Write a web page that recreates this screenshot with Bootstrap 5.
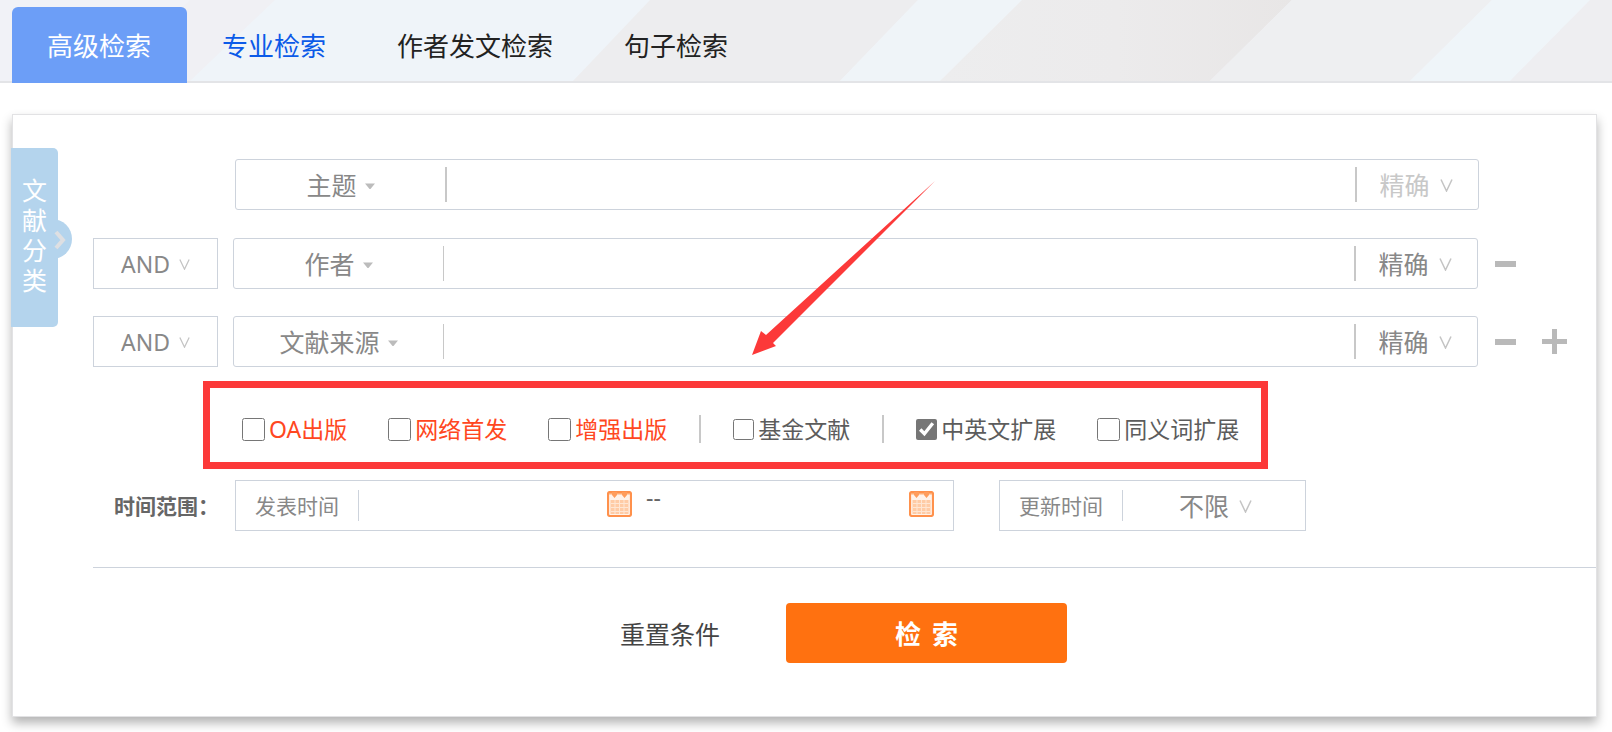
<!DOCTYPE html>
<html lang="zh-CN">
<head>
<meta charset="utf-8">
<meta name="viewport" content="width=device-width, initial-scale=1">
<title>高级检索</title>
<link href="https://cdn.jsdelivr.net/npm/bootstrap@5.3.0/dist/css/bootstrap.min.css" rel="stylesheet">
<style>
body { font-family: "Noto Sans", "Noto Sans CJK SC", sans-serif; color: #666; background: #fff; line-height: 30px; }
.topbar { background: #f1f2f7; border-bottom: 2px solid #e3e4e7; padding: 7px 12px 0; }
.topbar-art { position: absolute; inset: 0; width: 100%; height: 100%; }
.tabs { margin-bottom: -2px; }
.tabs a { padding: 0 36px 0 35px; height: 76px; line-height: 78px; font-size: 26px; color: #222; border-radius: 6px 6px 0 0; white-space: nowrap; }
.tabs a.active { background: #6c9ef7; color: #fff; }
.tabs a.hovered { color: #0b5ae8; }
.panel { margin: 31px 15px 15px 12px; border: 1px solid #e2e2e4; padding: 44px 0 53px 80px; box-shadow: 0 6px 10px rgba(0,0,0,.3); background: #fff; }
.side-tab { position: absolute; left: -2px; top: 33px; width: 47px; height: 179px; font-size: 25px; color: #fff; background: #b4d4ed; border: 0; border-radius: 0 5px 5px 0; padding: 0 2px 5px 0; gap: 5px; }
.side-tab svg { position: absolute; left: 21px; top: 71px; z-index: 0; }
.side-tab span { position: relative; z-index: 1; writing-mode: vertical-rl; }
.query-row { margin-bottom: 27px; gap: 15px; }
.lead-row { margin-bottom: 28px; }
.logic { width: 125px; gap: 9px; }
.lead-row .logic-space { width: 127px; }
.boxed { height: 51px; border: 1px solid #cdd3dc; background: #fff; }
.query-box { border-radius: 3px; }
.field-pick { width: 209px; gap: 7px; }
.field-pick svg { margin-top: 2px; }
.match-pick { width: 121px; gap: 9px; padding-right: 3px; }
.vee { color: #c4c4c4; margin-top: 2px; }
.bar { width: 1px; height: 35px; background: #c8c8c8; flex: none; }
.bar-wide { width: 2px; }
.bar-date { width: 1px; height: 31px; background: #cdd3dc; flex: none; }
.bar-opt { width: 2px; height: 28px; background: #c8c8c8; flex: none; }
select { appearance: none; border: 0; padding: 0; background: transparent; color: #888; font-size: 25px; outline-offset: 2px; }
select:disabled { color: #c8c8c8; opacity: 1; }
.logic select { font-size: 23px; }
.plain-input { border: 0; outline: 0; background: transparent; min-width: 0; font-size: 23px; color: #666; }
.row-tools { width: 103px; gap: 26px; padding-left: 2px; }
.lead-row .row-tools { width: 102px; }
.tool { border: 0; background: transparent; padding: 0; line-height: 0; }
.marked { width: 1065px; max-width: 100%; height: 88px; margin: -13px 0 11px 110px; border: 7px solid #fc3939; padding: 11px 0 3px 32px; gap: 32px; }
.marked label { gap: 4px; font-size: 23px; white-space: nowrap; color: #5c5c5c; }
.marked label + label { margin-left: 9px; }
.marked label.hot { color: #ff4721; }
.marked input { width: 23px; height: 23px; margin: 0; accent-color: #767676; }
.marked input.tight { width: 21px; height: 21px; }
.time-title { width: 142px; padding-left: 21px; font-size: 21px; font-weight: 700; white-space: nowrap; }
.pub-box { width: 719px; margin-right: 45px; }
.pub-box .tool { margin-bottom: 3px; }
.upd-box { width: 307px; }
.upd-pick { padding-left: 3px; gap: 9px; }
.cap { font-size: 21px; color: #888; white-space: nowrap; padding: 0 19px; }
.date-from { width: 248px; }
.date-to { width: 247px; }
.dashes { width: 16px; margin: -18px 0 0 14px; font-size: 23px; }
.rule { height: 1px; background: #cdd3dc; margin: 36px 0 35px; }
.actions { gap: 66px; margin-left: 527px; }
.reset { color: #444; font-size: 25px; border: 0; background: transparent; padding: 2px 0 0; }
.go { width: 281px; height: 60px; padding-top: 3px; gap: 11px; background: #ff7110; color: #fff; font-size: 26px; font-weight: 700; border: 0; border-radius: 4px; }
.pointer-art { position: absolute; left: 738px; top: 65px; pointer-events: none; }
</style>
</head>
<body>
<svg class="d-none" aria-hidden="true">
  <symbol id="vee" viewBox="0 0 13 13"><path d="M1 .5 6.500 12 12 .5" fill="none" stroke="currentColor" stroke-width="1.5"/></symbol>
  <symbol id="tri" viewBox="0 0 10 6"><path d="M0 .5h10L5.500 6h-1z" fill="#bcbcbc"/></symbol>
  <symbol id="minus" viewBox="0 0 21 6"><path d="M0 0h21v6H0z" fill="#b9b9b9"/></symbol>
  <symbol id="cal" viewBox="0 0 25 26">
    <rect x="1" y="1" width="23" height="24" rx="2" fill="#fff3ea" stroke="#ff914c" stroke-width="2.200"/>
    <path d="M2 2h21v1.500H2z" fill="#ffad75"/>
    <path d="M5 1h5v3L7.500 7 5 4zM15 1h5v3l-2.500 3L15 4z" fill="#ff9d5c"/>
    <path d="M3.500 9h18v14h-18z" fill="#ffcba5"/>
    <path d="M4 12.500h17M4 16.500h17M4 20.500h17M8 9v14M12.500 9v14M17 9v14" stroke="#ffe6d3" stroke-width="1"/>
  </symbol>
</svg>

<header class="topbar position-relative">
  <svg class="topbar-art" viewBox="0 0 1612 82" preserveAspectRatio="none" aria-hidden="true">
    <defs><linearGradient id="warm"><stop offset="0" stop-color="#ededee"/><stop offset=".5" stop-color="#ecebec"/><stop offset="1" stop-color="#e8e6e6"/></linearGradient></defs>
    <path d="M190 0h95l-80 82h-95z" fill="#f0f0f4"/>
    <path d="M275 0h378l-80 82H190z" fill="#eff4f9"/>
    <path d="M650 0h268l-78 82H573z" fill="#ededef"/>
    <path d="M918 0h104l-82 82H840z" fill="#eff4f8"/>
    <path d="M1022 0h270l-82 82H940z" fill="url(#warm)"/>
    <path d="M1292 0h200l-82 82h-200z" fill="#eeeff1"/>
    <path d="M1492 0h98l-80 82h-100z" fill="#eff5f9"/>
    <path d="M1590 0h22v82h-102z" fill="#eeeef1"/>
  </svg>
  <nav class="tabs d-flex position-relative">
    <a class="active text-decoration-none" href="#">高级检索</a>
    <a class="hovered text-decoration-none" href="#">专业检索</a>
    <a class="text-decoration-none" href="#">作者发文检索</a>
    <a class="text-decoration-none" href="#">句子检索</a>
  </nav>
</header>

<main class="panel position-relative">
  <button type="button" class="side-tab d-flex flex-column align-items-center justify-content-center">
    <svg width="40" height="40" viewBox="0 0 40 40" aria-hidden="true"><circle cx="20" cy="20" r="20" fill="#b4d4ed"/><path d="m24 13 7 8-7 8" fill="none" stroke="#dedfe2" stroke-width="4"/></svg>
    <span>文</span><span>献</span><span>分</span><span>类</span>
  </button>

  <form>
    <div class="query-row lead-row d-flex">
      <div class="logic-space"></div>
      <div class="boxed query-box d-flex align-items-center flex-grow-1">
        <div class="field-pick d-flex align-items-center justify-content-center"><select aria-label="检索项一"><option>主题</option></select><svg width="10" height="6"><use href="#tri"/></svg></div>
        <span class="bar bar-wide"></span>
        <input class="plain-input flex-grow-1 h-100 px-3" type="text" aria-label="主题">
        <span class="bar bar-wide"></span>
        <div class="match-pick d-flex align-items-center justify-content-center"><select disabled aria-label="匹配一"><option>精确</option></select><svg class="vee" width="13" height="13"><use href="#vee"/></svg></div>
      </div>
      <div class="row-tools"></div>
    </div>

    <div class="query-row d-flex">
      <div class="boxed logic d-flex align-items-center justify-content-center"><select aria-label="逻辑二"><option>AND</option></select><svg class="vee" width="11" height="11"><use href="#vee"/></svg></div>
      <div class="boxed query-box d-flex align-items-center flex-grow-1">
        <div class="field-pick d-flex align-items-center justify-content-center"><select aria-label="检索项二"><option>作者</option></select><svg width="10" height="6"><use href="#tri"/></svg></div>
        <span class="bar"></span>
        <input class="plain-input flex-grow-1 h-100 px-3" type="text" aria-label="作者">
        <span class="bar bar-wide"></span>
        <div class="match-pick d-flex align-items-center justify-content-center"><select aria-label="匹配二"><option>精确</option></select><svg class="vee" width="13" height="13"><use href="#vee"/></svg></div>
      </div>
      <div class="row-tools d-flex align-items-center"><button type="button" class="tool" aria-label="删除"><svg width="21" height="6"><use href="#minus"/></svg></button></div>
    </div>

    <div class="query-row d-flex">
      <div class="boxed logic d-flex align-items-center justify-content-center"><select aria-label="逻辑三"><option>AND</option></select><svg class="vee" width="11" height="11"><use href="#vee"/></svg></div>
      <div class="boxed query-box d-flex align-items-center flex-grow-1">
        <div class="field-pick d-flex align-items-center justify-content-center"><select aria-label="检索项三"><option>文献来源</option></select><svg width="10" height="6"><use href="#tri"/></svg></div>
        <span class="bar"></span>
        <input class="plain-input flex-grow-1 h-100 px-3" type="text" aria-label="文献来源">
        <span class="bar bar-wide"></span>
        <div class="match-pick d-flex align-items-center justify-content-center"><select aria-label="匹配三"><option>精确</option></select><svg class="vee" width="13" height="13"><use href="#vee"/></svg></div>
      </div>
      <div class="row-tools d-flex align-items-center">
        <button type="button" class="tool" aria-label="删除"><svg width="21" height="6"><use href="#minus"/></svg></button>
        <button type="button" class="tool" aria-label="添加"><svg width="25" height="25" viewBox="0 0 25 25"><path d="M0 10h10V0h5v10h10v5H15v10h-5V15H0z" fill="#b9b9b9"/></svg></button>
      </div>
    </div>

    <div class="marked d-flex align-items-center">
      <label class="hot d-flex align-items-center"><input type="checkbox">OA出版</label>
      <label class="hot d-flex align-items-center"><input type="checkbox">网络首发</label>
      <label class="hot d-flex align-items-center"><input type="checkbox">增强出版</label>
      <span class="bar-opt"></span>
      <label class="d-flex align-items-center"><input class="tight" type="checkbox">基金文献</label>
      <span class="bar-opt"></span>
      <label class="d-flex align-items-center"><input class="tight" type="checkbox" checked>中英文扩展</label>
      <label class="d-flex align-items-center"><input type="checkbox">同义词扩展</label>
    </div>

    <div class="d-flex align-items-center">
      <div class="time-title">时间范围：</div>
      <div class="boxed pub-box d-flex align-items-center">
        <label class="cap" for="from">发表时间</label>
        <span class="bar-date"></span>
        <input class="plain-input date-from h-100 px-3" id="from" type="text">
        <button type="button" class="tool" aria-label="选择起始日期"><svg width="25" height="26"><use href="#cal"/></svg></button>
        <span class="dashes">--</span>
        <input class="plain-input date-to h-100 px-3" type="text" aria-label="结束日期">
        <button type="button" class="tool" aria-label="选择结束日期"><svg width="25" height="26"><use href="#cal"/></svg></button>
      </div>
      <div class="boxed upd-box d-flex align-items-center">
        <label class="cap" for="upd">更新时间</label>
        <span class="bar-date"></span>
        <div class="upd-pick d-flex flex-grow-1 align-items-center justify-content-center"><select id="upd"><option>不限</option></select><svg class="vee" width="13" height="13"><use href="#vee"/></svg></div>
      </div>
    </div>

    <div class="rule"></div>

    <div class="actions d-flex align-items-center">
      <button type="reset" class="reset">重置条件</button>
      <button type="button" class="go d-flex align-items-center justify-content-center"><span>检</span> <span>索</span></button>
    </div>
  </form>

  <svg class="pointer-art" width="184" height="177" viewBox="0 0 184 177" aria-hidden="true"><path d="m1 175 9-24 5 4L184 1 22 163l3 3z" fill="#fc3939"/></svg>
</main>
<script src="https://cdn.jsdelivr.net/npm/bootstrap@5.3.0/dist/js/bootstrap.bundle.min.js"></script>
</body>
</html>
